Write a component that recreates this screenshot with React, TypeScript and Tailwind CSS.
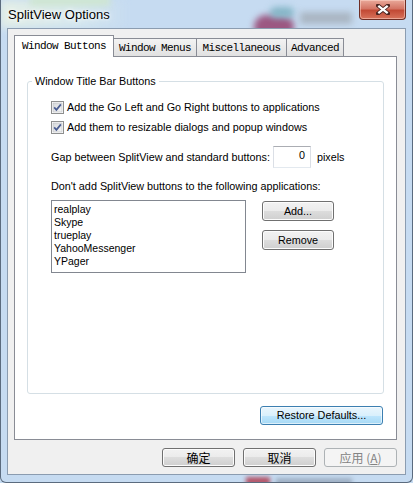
import React from "react"

const apps = ["realplay", "Skype", "trueplay", "YahooMessenger", "YPager"]

function Check() {
  return (
    <svg width="13" height="13" viewBox="0 0 13 13" className="shrink-0">
      <defs>
        <linearGradient id="cbg" x1="0" y1="0" x2="1" y2="1">
          <stop offset="0" stopColor="#d6d8db" />
          <stop offset="1" stopColor="#f6f6f6" />
        </linearGradient>
      </defs>
      <rect x="0.5" y="0.5" width="12" height="12" fill="#fff" stroke="#8e8f8f" />
      <rect x="2" y="2" width="9" height="9" fill="url(#cbg)" stroke="#b8bbbf" strokeWidth="0.6" />
      <path d="M3.2 6.4 L5.4 8.9 L9.9 3.4" fill="none" stroke="#4a5d92" strokeWidth="1.7" />
    </svg>
  )
}

function Button({ children, className = "" }: { children: React.ReactNode; className?: string }) {
  return (
    <div
      className={
        "flex items-center justify-center rounded-[3px] border border-[#707070] bg-[linear-gradient(#f2f2f2_0%,#ebebeb_50%,#dddddd_50%,#cfcfcf_100%)] shadow-[inset_0_0_0_1px_#fcfcfc] text-black " +
        className
      }
    >
      {children}
    </div>
  )
}

const tabs = [
  { label: "Window Menus", w: "w-[84px]" },
  { label: "Miscellaneous", w: "w-[91px]" },
  { label: "Advanced", w: "w-[58px]" },
]

export default function App() {
  return (
    <div className="relative w-[413px] h-[483px] overflow-hidden bg-[#c6dbf1] font-['Liberation_Sans',Arial,sans-serif] text-[10.8px] text-black">
      {/* desktop showing through the glass frame */}
      <div className="absolute left-0 top-0 w-[130px] h-[28px] bg-[linear-gradient(90deg,#e4efe6,#d6e8ee_60%,transparent)] blur-[4px]" />
      <div className="absolute left-[30px] top-[-4px] w-[80px] h-[10px] bg-[#cfe6d2] blur-[3px]" />
      <div className="absolute left-[254px] top-[15px] w-[40px] h-[24px] rounded-full bg-[#9c5882] blur-[3px]" />
      <div className="absolute left-[270px] top-[7px] w-[24px] h-[11px] rounded-full bg-[#86b7c8] blur-[3px]" />
      <div className="absolute left-[300px] top-[12px] w-[52px] h-[12px] bg-[#aab6c3] blur-[3px]" />
      <div className="absolute left-[246px] top-[477px] w-[24px] h-[8px] bg-[#b35468] blur-[2px]" />
      <div className="absolute left-[276px] top-[478px] w-[76px] h-[8px] bg-[#9fb0c4] blur-[2px]" />

      <div className="relative flex flex-col h-full border-x border-b border-[#5b6b7e] rounded-b-[6px]">
        {/* title bar */}
        <div className="flex items-start h-[28px]">
          <div className="pl-[7px] pt-[7px] text-[13px] leading-[16px] [text-shadow:0_0_6px_#fff,0_0_3px_#fff]">
            SplitView Options
          </div>
          <div className="ml-auto mr-[6px] w-[47px] h-[20px] rounded-b-[4px] border border-t-0 border-[#6e2d24] bg-[linear-gradient(#e9a99a_0%,#d47565_45%,#c24a35_55%,#d8735c_100%)] shadow-[inset_0_0_0_1px_rgba(255,220,210,0.5)] flex items-center justify-center">
            <svg width="14" height="11" viewBox="0 0 14 11">
              <path d="M2 1.5 L12 9.5 M12 1.5 L2 9.5" stroke="#4a2420" strokeWidth="4" strokeLinecap="square" />
              <path d="M2.3 1.8 L11.7 9.2 M11.7 1.8 L2.3 9.2" stroke="#fff" strokeWidth="2.3" />
            </svg>
          </div>
        </div>

        {/* client area */}
        <div className="mx-[6px] mb-[7px] flex-1 border border-[#8b9cb0] bg-[#f0f0f0] pl-[6px] pt-[6px] pr-[8px]">
          {/* tab strip */}
          <div className="flex items-end h-[21px] font-['Liberation_Mono','Courier_New',monospace] text-[11px] tracking-[-0.6px]">
            <div className="relative z-10 w-[100px] h-[22px] -mb-px border border-b-0 border-[#898c95] bg-white pl-[7px] flex items-center">
              Window Buttons
            </div>
            {tabs.map((t) => (
              <div
                key={t.label}
                className={
                  t.w +
                  " -ml-px h-[18px] border border-b-0 border-[#898c95] bg-[linear-gradient(#f3f3f3,#e1e1e1)] flex items-center justify-center pt-[2px]"
                }
              >
                {t.label}
              </div>
            ))}
          </div>

          {/* tab page */}
          <div className="h-[384px] border border-[#898c95] bg-white flex flex-col">
            <div className="relative mt-[24px] mx-[12px] h-[313px] rounded-[3px] border border-[#d5dfe5] pl-[23px] pt-[15px]">
              <span className="absolute left-[4px] top-[-7px] bg-white px-[3px] leading-[13px]">
                Window Title Bar Buttons
              </span>
              <div className="flex items-center gap-[3px] h-[20px]">
                <Check />
                <span>Add the Go Left and Go Right buttons to applications</span>
              </div>
              <div className="flex items-center gap-[3px] h-[20px]">
                <Check />
                <span>Add them to resizable dialogs and popup windows</span>
              </div>
              <div className="flex items-center mt-[9px] h-[22px]">
                <span>Gap between SplitView and standard buttons:</span>
                <div className="ml-[3px] w-[38px] h-[22px] border border-[#abadb3] border-x-[#dbdfe6] border-b-[#e3e9ef] flex items-center justify-end pr-[5px] pb-[3px]">
                  0
                </div>
                <span className="ml-[6px]">pixels</span>
              </div>
              <div className="mt-[11px] h-[14px] leading-[14px]">
                Don't add SplitView buttons to the following applications:
              </div>
              <div className="mt-[7px] flex items-start">
                <div className="w-[195px] h-[73px] border border-[#828790] pl-[2px] pt-[2px] text-[10.5px] leading-[13px]">
                  {apps.map((a) => (
                    <div key={a}>{a}</div>
                  ))}
                </div>
                <div className="ml-[16px] mt-[1px] flex flex-col gap-[9px]">
                  <Button className="w-[72px] h-[20px]">Add...</Button>
                  <Button className="w-[72px] h-[20px]">Remove</Button>
                </div>
              </div>
            </div>

            <div className="mt-[12px] mr-[13px] self-end w-[123px] h-[19px] rounded-[3px] border border-[#3c7fb1] bg-[linear-gradient(#eaf6fd_0%,#d9f0fc_50%,#bee6fd_50%,#a7d9f5_100%)] shadow-[inset_0_0_0_1px_rgba(255,255,255,0.6)] flex items-center justify-center">
              Restore Defaults...
            </div>
          </div>

          {/* dialog buttons */}
          <div className="mt-[8px] flex justify-end gap-[8px] font-['Noto_Sans_CJK_SC',sans-serif] text-[12px]">
            <Button className="w-[73px] h-[19px]">确定</Button>
            <Button className="w-[73px] h-[19px]">取消</Button>
            <div className="w-[73px] h-[19px] rounded-[3px] border border-[#adb2b5] bg-[#f4f4f4] text-[#838383] flex items-center justify-center">
              应用 (<span className="underline">A</span>)
            </div>
          </div>
        </div>
      </div>
    </div>
  )
}
